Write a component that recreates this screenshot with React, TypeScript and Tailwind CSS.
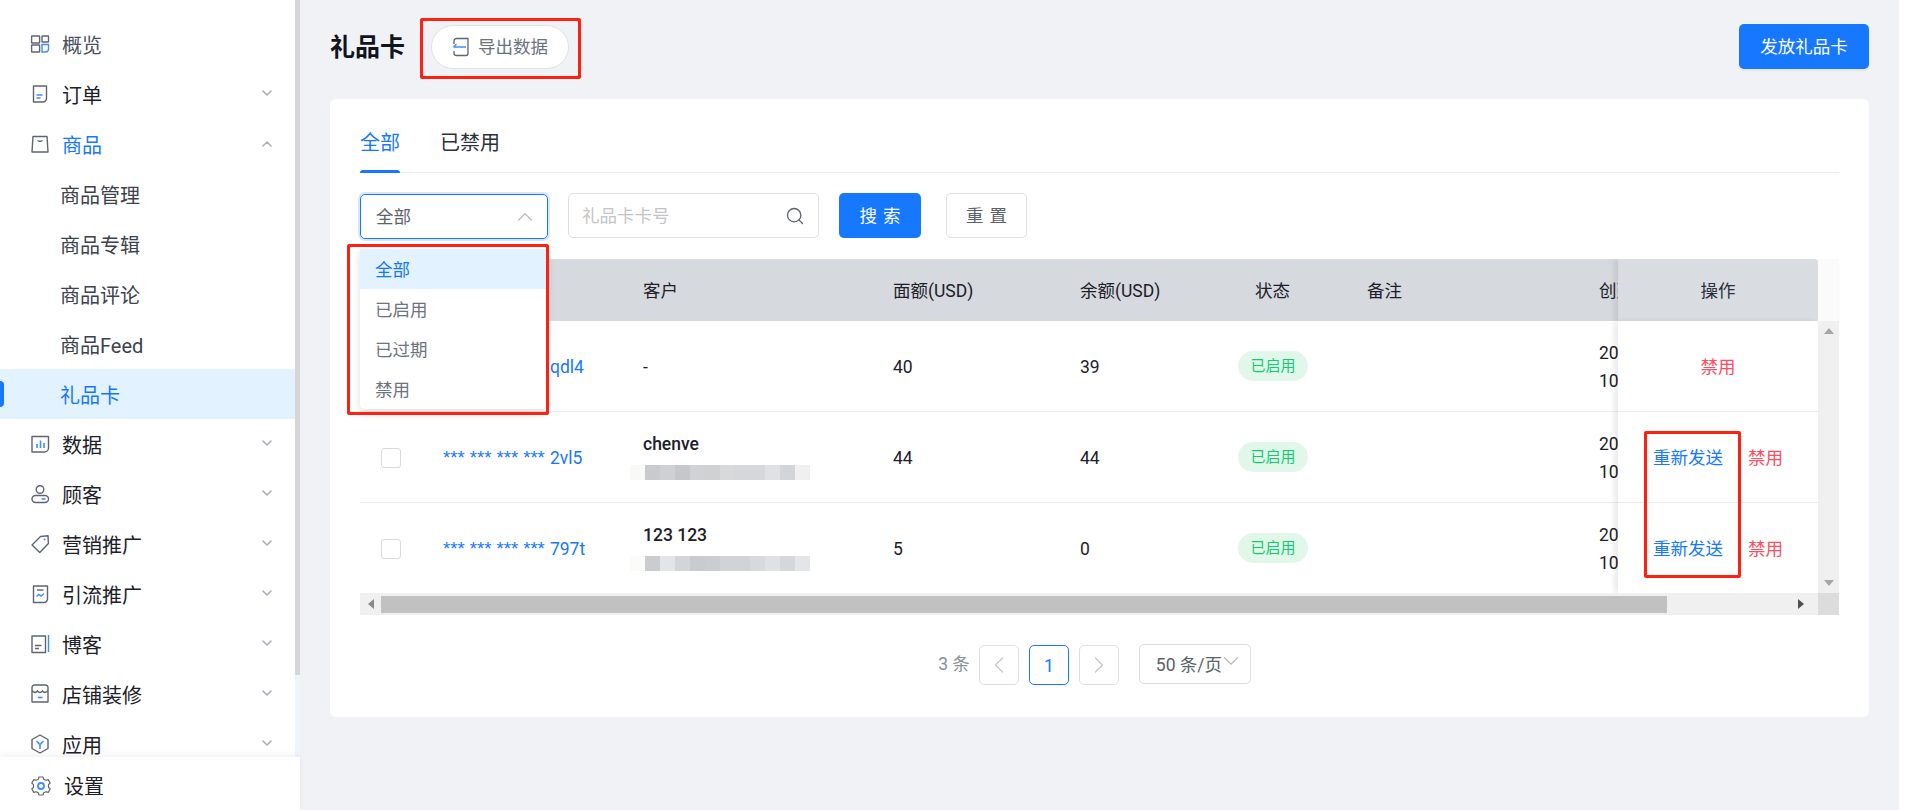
import { ChevronDown, ChevronLeft, ChevronRight, ChevronUp, Search } from "lucide-react";

const FONT = 'Roboto, "Noto Sans CJK SC", sans-serif';

// two-tone menu icons, grey outline and blue accent
const Ico = ({ children }: { children: React.ReactNode }) => (
  <svg width="20" height="20" viewBox="0 0 20 20" fill="none" strokeWidth="1.4" className="stroke-[#5f6570] shrink-0">
    {children}
  </svg>
);

const icons: Record<string, React.ReactNode> = {
  overview: (
    <Ico>
      <rect x="1.6" y="2" width="8" height="7" rx="0.5" />
      <rect x="1.6" y="11" width="8" height="7" rx="0.5" />
      <rect x="12" y="2" width="6.500" height="6" rx="0.5" />
      <path d="M12 10.500h6.500V15a3 3 0 0 1-3 3H12z" stroke="#3f8cff" />
    </Ico>
  ),
  order: (
    <Ico>
      <path d="M3.500 2h13v12.500a3.500 3.500 0 0 1-3.500 3.500H3.500z" strokeLinejoin="round" />
      <path d="M6.500 11h6M6.500 14h4" stroke="#3f8cff" />
    </Ico>
  ),
  goods: (
    <Ico>
      <path d="M3 2.500h14l1 15.500H2z" strokeLinejoin="round" />
      <path d="M7.500 6.500c1.500 1 3.500 1 5 0" stroke="#5f6570" />
    </Ico>
  ),
  data: (
    <Ico>
      <path d="M2 2.500h16.500V14a4 4 0 0 1-4 4H2z" strokeLinejoin="round" />
      <path d="M7 10v4M10.500 6.500V14M14 9v5" stroke="#3f8cff" strokeWidth="1.6" />
    </Ico>
  ),
  customer: (
    <Ico>
      <circle cx="10" cy="5.500" r="3.800" />
      <rect x="2" y="11.500" width="16.500" height="7" rx="3.500" />
      <path d="M11.500 15h4" stroke="#3f8cff" strokeWidth="1.6" />
    </Ico>
  ),
  tag: (
    <Ico>
      <path d="M10.500 2.500 18 1.800l.4 7.600-8.600 9L2 11z" strokeLinejoin="round" />
      <circle cx="14.500" cy="5.500" r="1" fill="#3f8cff" stroke="none" />
    </Ico>
  ),
  traffic: (
    <Ico>
      <path d="M3.500 2h14v13a3.500 3.500 0 0 1-3.500 3.500H3.500z" strokeLinejoin="round" />
      <path d="M7 6h6.500" />
      <path d="M6.500 12.500l2.500-2 2 1.500 3-2.500" stroke="#3f8cff" />
    </Ico>
  ),
  blog: (
    <Ico>
      <path d="M15.500 2H2v16.500h13.500z" strokeLinejoin="round" />
      <path d="M5 11.500h6.500M5 14.500h4" />
      <path d="M18.500 1v17" stroke="#3f8cff" />
    </Ico>
  ),
  shop: (
    <Ico>
      <path d="M2 7V3.500A2.500 2.500 0 0 1 4.500 1h11A2.500 2.500 0 0 1 18 3.500V18H2z" strokeLinejoin="round" />
      <path d="M2 6.500c2 2.500 4 2.500 5.500.5 1.500 2 3.500 2 5 0 1.500 2 3.500 2 5.500-.5" />
      <path d="M8 13.500h4.500" stroke="#3f8cff" strokeWidth="1.6" />
    </Ico>
  ),
  app: (
    <Ico>
      <path d="M10 1 18 5.500v9L10 19l-8-4.500v-9z" strokeLinejoin="round" />
      <path d="M6.500 7 10 10.500 13.500 7M10 10.500V15" stroke="#3f8cff" strokeWidth="1.6" />
    </Ico>
  ),
};

const menu: { key: string; label: string; open?: boolean; active?: boolean; noArrow?: boolean }[] = [
  { key: "overview", label: "概览", noArrow: true },
  { key: "order", label: "订单" },
  { key: "goods", label: "商品", open: true, active: true },
];
const menuRest = [
  { key: "data", label: "数据" },
  { key: "customer", label: "顾客" },
  { key: "tag", label: "营销推广" },
  { key: "traffic", label: "引流推广" },
  { key: "blog", label: "博客" },
  { key: "shop", label: "店铺装修" },
  { key: "app", label: "应用" },
];
const subMenu = ["商品管理", "商品专辑", "商品评论", "商品Feed"];

function MenuRow({ icon, label, open, active, noArrow }: { icon: string; label: string; open?: boolean; active?: boolean; noArrow?: boolean }) {
  return (
    <div className="flex h-[50px] shrink-0 items-center pl-[30px] pr-[20px]">
      {icons[icon]}
      <span className={`ml-[12px] mt-[3px] flex-1 text-[20px] ${active ? "text-[#1677ff]" : noArrow ? "text-[#4b515c]" : "text-[#1c2029]"}`}>{label}</span>
      {!noArrow &&
        (open ? (
          <ChevronUp size={16} strokeWidth={2.4} className="text-[#a8adb8]" />
        ) : (
          <ChevronDown size={16} strokeWidth={2.4} className="mt-[-2px] text-[#a8adb8]" />
        ))}
    </div>
  );
}

function Sidebar() {
  return (
    <aside className="flex h-full w-[300px] shrink-0 flex-col bg-white">
      <div className="flex min-h-0 flex-1">
        <nav className="flex w-[295px] flex-col overflow-hidden pt-[19px]">
          {menu.map((m) => (
            <MenuRow key={m.key} icon={m.key} label={m.label} open={m.open} active={m.active} noArrow={m.noArrow} />
          ))}
          {subMenu.map((s) => (
            <div key={s} className="flex h-[50px] shrink-0 items-center pl-[60px] pt-[3px] text-[20px] text-[#3c424e]">
              {s}
            </div>
          ))}
          <div className="relative flex h-[50px] shrink-0 items-center bg-[#e3f2ff] pl-[60px] pt-[3px] text-[20px] text-[#1677ff]">
            <span className="absolute left-0 top-[12px] h-[26px] w-[4px] rounded-r-full bg-[#1677ff]" />
            礼品卡
          </div>
          {menuRest.map((m) => (
            <MenuRow key={m.key} icon={m.key} label={m.label} />
          ))}
        </nav>
        <div className="w-[5px] bg-[#eef5fd]">
          <div className="h-[675px] bg-[#d6d6d6]" />
        </div>
      </div>
      <div className="z-10 flex h-[53px] shrink-0 items-center bg-white pl-[31px] pt-[5px] shadow-[0_-2px_6px_rgba(0,0,0,0.06)]">
        <svg width="20" height="20" viewBox="0 0 20 20" fill="none" strokeWidth="1.2" className="stroke-[#5f6570]">
          <path
            d="M8 1h4l.7 2.300 2.200 1 2.300-.7 2 3.400-1.700 1.700v2.600l1.700 1.700-2 3.400-2.300-.7-2.200 1L12 19H8l-.7-2.300-2.200-1-2.300.7-2-3.400 1.700-1.700V8.700L.8 7l2-3.400 2.300.7 2.200-1z"
            strokeLinejoin="round"
          />
          <circle cx="10" cy="10" r="3" stroke="#3f8cff" strokeWidth="1.8" />
        </svg>
        <span className="ml-[13px] mt-[2px] text-[20px] text-[#1c2029]">设置</span>
      </div>
    </aside>
  );
}

type Block = string;
const mosaicA: Block[] = ["bg-[#f9f9f8]", "bg-[#c9cacd]", "bg-[#cfd0d3]", "bg-[#c6c7ca]", "bg-[#d0d2d5]", "bg-[#cfd1d3]", "bg-[#d8d9db]", "bg-[#d6d7da]", "bg-[#d6d7da]", "bg-[#e0e1e3]", "bg-[#d4d5d8]", "bg-[#f0f0f1]"];
const mosaicB: Block[] = ["bg-[#fbfbfa]", "bg-[#cbcccf]", "bg-[#e4e5e7]", "bg-[#d4d5d8]", "bg-[#c9cbce]", "bg-[#cbcdd0]", "bg-[#d2d3d6]", "bg-[#d2d3d6]", "bg-[#d8d9dc]", "bg-[#e0e1e4]", "bg-[#d6d7da]", "bg-[#e4e5e7]"];

const Mosaic = ({ blocks }: { blocks: Block[] }) => (
  <div className="ml-[-13px] mt-[8px] flex h-[15px]">
    {blocks.map((c, i) => (
      <div key={i} className={`h-[15px] w-[15px] ${c}`} />
    ))}
  </div>
);

const rows = [
  { id: "qdl4", check: false, name: "-", mosaic: null, face: "40", left: "39", resend: false, h: "h-[91px]" },
  { id: "2vl5", check: true, name: "chenve", mosaic: mosaicA, face: "44", left: "44", resend: true, h: "h-[91px]" },
  { id: "797t", check: true, name: "123 123", mosaic: mosaicB, face: "5", left: "0", resend: true, h: "h-[90px] border-b-0" },
];

function GiftTable() {
  return (
    <div className="mt-[20px] w-[1479px]">
      <div className="flex h-[62px]">
        <div className="flex w-[1458px] overflow-hidden rounded-t-[4px] bg-[#d6d9de] text-[17.5px] text-[#1c2029]">
          <div className="flex min-w-0 flex-1 items-center overflow-hidden pt-[2px]">
            <div className="w-[283px] shrink-0" />
            <div className="w-[250px] shrink-0">客户</div>
            <div className="w-[187px] shrink-0">面额(USD)</div>
            <div className="w-[158px] shrink-0">余额(USD)</div>
            <div className="w-[129px] shrink-0 pl-[17px]">状态</div>
            <div className="w-[232px] shrink-0">备注</div>
            <div className="shrink-0 whitespace-nowrap">创建时间</div>
          </div>
          <div className="flex w-[200px] shrink-0 items-center justify-center bg-[#d9dce1] pt-[2px] text-[#2a2f3a] shadow-[-4px_0_5px_rgba(0,0,0,0.08)]">操作</div>
        </div>
        <div className="w-[21px] bg-[#fbfbfb]" />
      </div>
      <div className="flex h-[272px]">
        <div className="flex w-[1458px] text-[17.5px] text-[#1c2029]">
          <div className="min-w-0 flex-1 overflow-hidden">
            {rows.map((r) => (
              <div key={r.id} className={`flex items-center border-b border-[#ececec] pt-[2px] ${r.h}`}>
                <div className="w-[83px] shrink-0 pl-[21px]">
                  {r.check && <div className="h-[20px] w-[20px] rounded-[3px] border border-[#d9d9d9] bg-white" />}
                </div>
                <div className="w-[200px] shrink-0 whitespace-nowrap text-[#1677ff]">
                  <span className="font-['Liberation_Sans'] text-[18.500px]">*** *** *** *** </span>
                  <span className="text-[17.5px]">{r.id}</span>
                </div>
                <div className={`w-[250px] shrink-0 ${r.mosaic ? "pb-[6px]" : ""}`}>
                  <div className={r.mosaic ? "font-medium leading-[26px]" : ""}>{r.name}</div>
                  {r.mosaic && <Mosaic blocks={r.mosaic} />}
                </div>
                <div className="w-[187px] shrink-0">{r.face}</div>
                <div className="w-[158px] shrink-0">{r.left}</div>
                <div className="w-[129px] shrink-0">
                  <span className="mt-[-2px] flex h-[30px] w-[70px] items-center justify-center rounded-full bg-[#e1f7ea] text-[15px] text-[#0fcb72]">已启用</span>
                </div>
                <div className="w-[232px] shrink-0" />
                <div className="shrink-0 whitespace-nowrap leading-[28px]">
                  <div>20</div>
                  <div>10</div>
                </div>
              </div>
            ))}
          </div>
          <div className="w-[200px] shrink-0 bg-white shadow-[-4px_0_5px_rgba(0,0,0,0.08)]">
            {rows.map((r) => (
              <div key={r.id} className={`flex items-center border-b border-[#ececec] pt-[2px] ${r.h} ${r.resend ? "pl-[35px]" : "justify-center"}`}>
                {r.resend && <span className="mr-[25px] text-[#1677ff]">重新发送</span>}
                <span className="text-[#ff4d5f]">禁用</span>
              </div>
            ))}
          </div>
        </div>
        <div className="flex w-[21px] flex-col items-center justify-between bg-[#f0f0f0] py-[7px]">
          <svg width="10" height="6" viewBox="0 0 10 6" className="fill-[#a6a6a6]"><path d="M5 0l5 6H0z" /></svg>
          <svg width="10" height="6" viewBox="0 0 10 6" className="fill-[#a6a6a6]"><path d="M5 6l5-6H0z" /></svg>
        </div>
      </div>
      <div className="flex h-[22px]">
        <div className="flex w-[1458px] items-center bg-[#f0f0f0]">
          <div className="flex w-[21px] shrink-0 justify-center">
            <svg width="6" height="10" viewBox="0 0 6 10" className="fill-[#8a8a8a]"><path d="M0 5l6-5v10z" /></svg>
          </div>
          <div className="h-[17px] w-[1286px] bg-[#c1c1c1]" />
          <div className="flex flex-1 justify-end pr-[14px]">
            <svg width="6" height="10" viewBox="0 0 6 10" className="fill-[#505050]"><path d="M6 5L0 0v10z" /></svg>
          </div>
        </div>
        <div className="w-[21px] bg-[#dcdcdc]" />
      </div>
    </div>
  );
}

function Pagination() {
  return (
    <div className="mt-[30px] flex items-center justify-center pr-[10px] text-[17.5px] text-[#8a8f99]">
      <span className="mr-[9px] mt-[-1px]">3 条</span>
      <div className="flex h-[40px] w-[40px] items-center justify-center rounded-[5px] border border-[#dcdfe4] text-[#c4c7cc]">
        <ChevronLeft size={28} strokeWidth={1.1} />
      </div>
      <div className="ml-[10px] flex h-[40px] w-[40px] items-center justify-center rounded-[5px] border border-[#1677ff] pt-[2px] text-[#1677ff]">1</div>
      <div className="ml-[10px] flex h-[40px] w-[40px] items-center justify-center rounded-[5px] border border-[#dcdfe4] text-[#c4c7cc]">
        <ChevronRight size={28} strokeWidth={1.1} />
      </div>
      <div className="ml-[20px] mt-[-2px] flex h-[40px] w-[112px] items-center rounded-[5px] border border-[#dcdfe4] pl-[16px] pt-[2px] text-[#5c616b]">
        <span className="whitespace-nowrap">50 条/页</span>
        <ChevronDown size={26} strokeWidth={1} className="ml-[-4px] mt-[-8px] text-[#b5b8bd]" />
      </div>
    </div>
  );
}

function Main() {
  return (
    <main className="relative h-full w-[1599px] shrink-0 bg-[#f0f2f6] px-[30px] pt-[24px]">
      <div className="flex h-[45px] items-center justify-between">
        <div className="flex items-center">
          <h1 className="pt-[3px] text-[25px] font-bold text-[#10141d]">礼品卡</h1>
          <button className="ml-[26px] flex h-[44px] w-[138px] items-center justify-center rounded-full border border-[#dfe1e5] bg-white text-[17.5px] text-[#6b7280]">
            <svg width="18" height="20" viewBox="0 0 18 20" fill="none" strokeWidth="1.3" className="mr-[8px] stroke-[#5f6570]">
              <path d="M2 7V4a2.500 2.500 0 0 1 2.500-2.500H16v15a2 2 0 0 1-2 2H4.500A2.500 2.500 0 0 1 2 16v-2" strokeLinejoin="round" />
              <path d="M14 10H1.500M4.500 7 1.500 10" stroke="#3f8cff" />
            </svg>
            <span className="pt-[2px]">导出数据</span>
          </button>
        </div>
        <button className="h-[45px] w-[130px] rounded-[5px] bg-[#1677ff] pt-[1px] text-[17.5px] text-white shadow-[0_2px_2px_rgba(0,0,0,0.05)]">发放礼品卡</button>
      </div>

      <section className="mt-[30px] h-[618px] rounded-[6px] bg-white px-[30px]">
        <div className="flex h-[74px] items-end border-b border-[#ececec]">
          <div className="relative flex h-[59px] w-[40px] items-start pt-[15px] text-[20px] text-[#1677ff]">
            全部
            <span className="absolute bottom-[-1px] left-0 h-[3px] w-full rounded-t-sm bg-[#1677ff]" />
          </div>
          <div className="ml-[40px] h-[59px] pt-[15px] text-[20px] text-[#2c313c]">已禁用</div>
        </div>

        <div className="mt-[21px] flex items-start">
          <div className="relative">
            <div className="flex h-[45px] w-[188px] items-center justify-between rounded-[5px] border border-[#1677ff] pl-[15px] pr-[9px] text-[17.5px] text-[#5c616b] shadow-[0_0_0_2px_rgba(22,119,255,0.18)]">
              <span className="pt-[2px]">全部</span>
              <ChevronUp size={26} strokeWidth={1} className="text-[#b5b8bd]" />
            </div>
            <ul className="absolute left-0 top-[55px] z-20 w-[187px] rounded-b-[5px] bg-white text-[17.5px] text-[#6e737d] shadow-[0_4px_10px_rgba(0,0,0,0.12)]">
              <li className="flex h-[40px] items-center bg-[#e3f2ff] pl-[15px] pt-[2px] text-[#1677ff]">全部</li>
              <li className="flex h-[40px] items-center pl-[15px] pt-[2px]">已启用</li>
              <li className="flex h-[40px] items-center pl-[15px] pt-[2px]">已过期</li>
              <li className="flex h-[40px] items-center pl-[15px] pt-[2px]">禁用</li>
            </ul>
          </div>
          <div className="ml-[20px] mt-[-1px] flex h-[45px] w-[251px] items-center justify-between rounded-[5px] border border-[#dcdfe4] pl-[13px] pr-[13px] text-[17.5px] text-[#c4c4c4]">
            <span className="pt-[2px]">礼品卡卡号</span>
            <Search size={20} strokeWidth={1.6} className="text-[#5c616b]" />
          </div>
          <button className="ml-[20px] mt-[-1px] h-[45px] w-[82px] rounded-[5px] bg-[#1677ff] pl-[6px] pt-[2px] text-[17.5px] tracking-[6px] text-white">搜索</button>
          <button className="ml-[25px] mt-[-1px] h-[45px] w-[81px] rounded-[5px] border border-[#dcdfe4] pl-[6px] pt-[2px] text-[17.5px] tracking-[6px] text-[#5c616b]">重置</button>
        </div>

        <GiftTable />
        <Pagination />
      </section>

      {/* red annotation boxes */}
      <div className="absolute left-[120px] top-[18px] h-[61px] w-[161px] rounded-[2px] border-[3px] border-[#ff2010]" />
      <div className="absolute left-[47px] top-[244px] z-30 h-[171px] w-[202px] rounded-[2px] border-[3px] border-[#ff2010]" />
      <div className="absolute left-[1344px] top-[431px] z-30 h-[147px] w-[97px] rounded-[2px] border-[3px] border-[#ff2010]" />
    </main>
  );
}

export default function App() {
  return (
    <div className="flex h-[810px] w-[1920px] overflow-hidden bg-white" style={{ fontFamily: FONT }}>
      <Sidebar />
      <Main />
    </div>
  );
}
